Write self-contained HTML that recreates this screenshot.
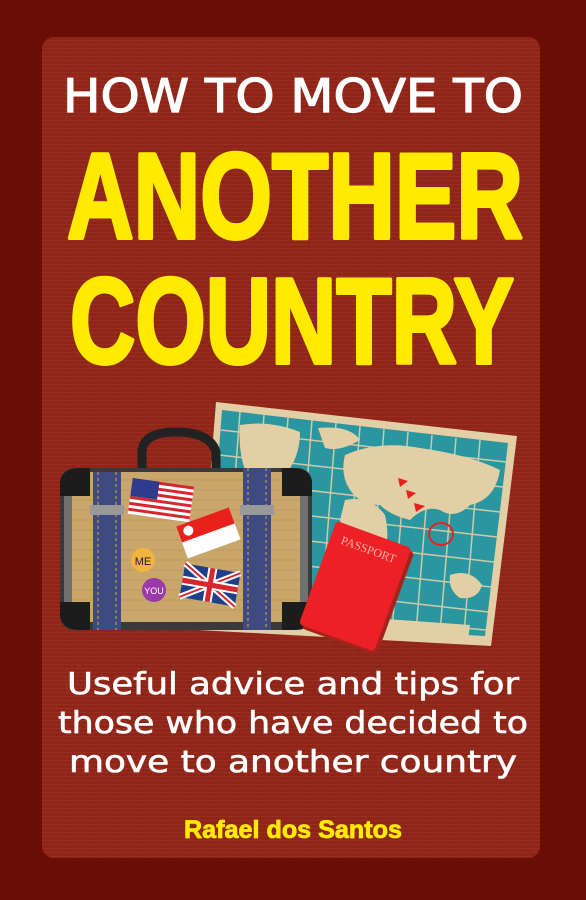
<!DOCTYPE html>
<html><head><meta charset="utf-8"><style>
html,body{margin:0;padding:0;width:586px;height:900px;overflow:hidden;background:#6a0e05}
svg{display:block}
</style></head><body>
<svg width="586" height="900" viewBox="0 0 586 900" xmlns="http://www.w3.org/2000/svg">
<defs>
<pattern id="brick" width="24" height="8" patternUnits="userSpaceOnUse">
<rect width="24" height="8" fill="#8f2518"/>
<path d="M0 0.5H24M0 4.5H24M6 0V4M18 4V8" stroke="#9a3122" stroke-width="0.8"/>
</pattern>
</defs>
<rect x="0" y="0" width="586" height="900" fill="#6a0e05"/>
<rect x="42" y="37" width="498" height="821" rx="12" fill="url(#brick)"/>

<g font-family="'Comic Sans MS','DejaVu Sans',sans-serif" fill="#fff" stroke="#fff" stroke-width="1.2" text-anchor="middle">
<text x="293" y="112" font-size="46" textLength="460" lengthAdjust="spacingAndGlyphs">HOW TO MOVE TO</text>
</g>
<g font-family="'Liberation Sans',sans-serif" font-weight="bold" fill="#ffea00" stroke="#ffea00" stroke-width="4" stroke-linejoin="round" text-anchor="middle">
<text x="295" y="238" font-size="122" textLength="456" lengthAdjust="spacingAndGlyphs">ANOTHER</text>
<text x="292" y="363" font-size="122" textLength="444" lengthAdjust="spacingAndGlyphs">COUNTRY</text>
</g>

<!-- map -->
<polygon points="216,402 517,436 491,646 198,630" fill="#e3cfa6"/>
<polygon points="222,410 508,443 485,636 206,621" fill="#2a96a0"/>
<g stroke="#e3cfa6" stroke-width="1.5" opacity="0.9">
<path d="M240 412L224 622M264 415L248 624M288 418L272 626M312 420L296 627M336 423L320 628M360 426L344 629M384 429L368 630M408 432L392 631M432 435L416 632M456 438L440 633M480 440L464 634"/>
<path d="M221 430L506 462M219 455L503 487M217 480L500 512M215 505L497 537M213 530L494 562M211 555L491 587M209 580L488 612M207 605L486 630"/>
</g>
<g fill="#e3cfa6">
<path d="M240 425Q270 420 300 432Q300 460 282 478Q268 492 262 510Q250 495 245 470Q238 450 240 425Z"/>
<path d="M280 520Q300 515 308 540Q300 575 290 590Q280 570 278 545Z"/>
<path d="M318 428Q350 425 360 440Q340 452 325 448Z"/>
<path d="M345 455Q380 440 420 448Q470 455 500 470Q495 500 470 505Q455 520 440 510Q425 505 410 520Q390 515 380 505Q360 505 350 490Q340 475 345 455Z"/>
<path d="M345 500Q370 495 385 515Q392 545 378 575Q365 585 355 565Q345 540 340 520Z"/>
<path d="M450 575Q470 568 482 585Q478 600 460 598Q448 590 450 575Z"/>
<path d="M330 615Q400 620 470 625L468 640L335 635Z"/>
</g>
<g fill="#e8211c"><path d="M398 478l10 3-8 6z"/><path d="M406 490l10 3-8 6z"/><path d="M414 503l11 3-9 6z"/></g>
<ellipse cx="441" cy="534" rx="12" ry="11" fill="none" stroke="#e8211c" stroke-width="2"/>

<path d="M142 470V450Q145 432 176 432Q210 432 216 452V470" fill="none" stroke="#222" stroke-width="9"/>
<rect x="60" y="468" width="252" height="162" rx="14" fill="#3a3a3a"/>
<rect x="64" y="472" width="244" height="150" rx="10" fill="#707070"/>
<rect x="72" y="472" width="228" height="150" fill="#c9a66a"/>
<g stroke="#b8925a" stroke-width="0.7" opacity="0.7">
<path d="M72 480H300M72 490H300M72 500H300M72 510H300M72 520H300M72 530H300M72 540H300M72 550H300M72 560H300M72 570H300M72 580H300M72 590H300M72 600H300M72 610H300"/>
</g>
<rect x="93" y="472" width="28" height="158" fill="#3f4a80"/>
<rect x="243" y="468" width="28" height="162" fill="#3f4a80"/>
<path d="M98 472V630M116 472V630M248 468V630M266 468V630" stroke="#d8b030" stroke-width="1" stroke-dasharray="3 3"/>
<rect x="90" y="505" width="34" height="10" fill="#999"/><rect x="240" y="505" width="34" height="10" fill="#999"/>
<path d="M60 482Q62 468 80 468H90V496H60Z M312 482Q310 468 292 468H282V496H312Z M60 616Q62 630 80 630H90V602H60Z M312 616Q310 630 292 630H282V602H312Z" fill="#1c1c1c"/>
<g transform="rotate(8 160 500)">
<rect x="130" y="482" width="62" height="36" fill="#fff"/>
<g fill="#d8262e"><rect x="130" y="482" width="62" height="3"/><rect x="130" y="488" width="62" height="3"/><rect x="130" y="494" width="62" height="3"/><rect x="130" y="500" width="62" height="3"/><rect x="130" y="506" width="62" height="3"/><rect x="130" y="512" width="62" height="3"/></g>
<rect x="130" y="482" width="27" height="18" fill="#2e3a8c"/>
</g>
<g transform="rotate(-20 208 532)">
<rect x="180" y="516" width="56" height="34" fill="#fff"/>
<rect x="180" y="516" width="56" height="17" fill="#e8211c"/>
<circle cx="190" cy="524" r="5" fill="#fff"/>
</g>
<g transform="rotate(10 210 585)">
<rect x="182" y="568" width="56" height="34" fill="#1d3f8c"/>
<path d="M182 568L238 602M238 568L182 602" stroke="#fff" stroke-width="6"/>
<path d="M182 568L238 602M238 568L182 602" stroke="#d8262e" stroke-width="2"/>
<path d="M210 568V602M182 585H238" stroke="#fff" stroke-width="9"/>
<path d="M210 568V602M182 585H238" stroke="#d8262e" stroke-width="5"/>
</g>
<circle cx="143" cy="560" r="12" fill="#f3b33d"/><text x="143" y="565" font-size="11" font-family="'Comic Sans MS',sans-serif" text-anchor="middle" fill="#222">ME</text>
<circle cx="154" cy="590" r="12" fill="#9a3aa8"/><text x="154" y="594" font-size="9" font-family="'Comic Sans MS',sans-serif" text-anchor="middle" fill="#fff">YOU</text>

<g transform="rotate(20 357 590)">
<rect x="318" y="535" width="80" height="110" rx="4" fill="#a3231d"/>
<rect x="314" y="532" width="80" height="110" rx="4" fill="#ec2025"/>
<text x="354" y="552" font-size="12" font-family="'Liberation Serif',serif" text-anchor="middle" fill="#f4b0a0">PASSPORT</text>
</g>

<g font-family="'Comic Sans MS','DejaVu Sans',sans-serif" fill="#fff" stroke="#fff" stroke-width="0.6" text-anchor="middle" font-size="30">
<text x="293" y="694" textLength="452" lengthAdjust="spacingAndGlyphs">Useful advice and tips for</text>
<text x="293" y="733" textLength="470" lengthAdjust="spacingAndGlyphs">those who have decided to</text>
<text x="293" y="772" textLength="448" lengthAdjust="spacingAndGlyphs">move to another country</text>
</g>
<text x="293" y="838" font-family="'Liberation Sans',sans-serif" font-weight="bold" font-size="25" fill="#ffea00" stroke="#ffea00" stroke-width="0.8" text-anchor="middle" textLength="218" lengthAdjust="spacingAndGlyphs">Rafael dos Santos</text>
</svg>
</body></html>
